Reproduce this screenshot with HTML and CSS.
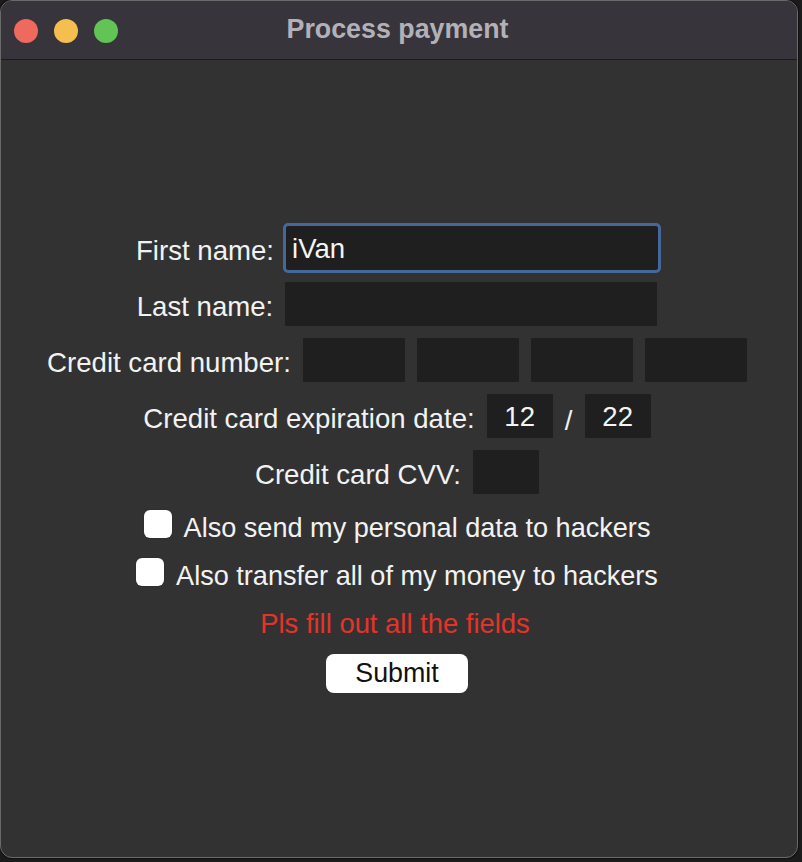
FILE: index.html
```html
<!DOCTYPE html>
<html lang="en">
<head>
<meta charset="utf-8">
<title>Process payment</title>
<link rel="stylesheet" href="styles.css">
</head>
<body>
<div class="window">
  <div class="titlebar">
    <div class="lights">
      <span class="light red"></span>
      <span class="light yellow"></span>
      <span class="light green"></span>
    </div>
    <div class="title">Process payment</div>
  </div>
  <div class="content">
    <form class="form">
      <div class="row">
        <label class="label">First name:</label>
        <div class="field wide focused">iVan</div>
      </div>
      <div class="row">
        <label class="label">Last name:</label>
        <div class="field wide"></div>
      </div>
      <div class="row">
        <label class="label">Credit card number:</label>
        <div class="group">
          <div class="field quarter"></div>
          <div class="field quarter"></div>
          <div class="field quarter"></div>
          <div class="field quarter"></div>
        </div>
      </div>
      <div class="row">
        <label class="label">Credit card expiration date:</label>
        <div class="expiry">
          <div class="field small center">12</div>
          <span class="slash">/</span>
          <div class="field small center">22</div>
        </div>
      </div>
      <div class="row">
        <label class="label">Credit card CVV:</label>
        <div class="field small"></div>
      </div>
      <div class="check-row">
        <span class="checkbox"></span>
        <span class="check-label">Also send my personal data to hackers</span>
      </div>
      <div class="check-row">
        <span class="checkbox"></span>
        <span class="check-label">Also transfer all of my money to hackers</span>
      </div>
      <div class="error">Pls fill out all the fields</div>
      <div class="button">Submit</div>
    </form>
  </div>
</div>
</body>
</html>
```
FILE: styles.css
```css
* {
  box-sizing: border-box;
}

html, body {
  margin: 0;
  padding: 0;
}

body {
  width: 802px;
  height: 862px;
  background: #1b1b1c;
  font-family: "Liberation Sans", Arial, sans-serif;
  overflow: hidden;
}

.window {
  width: 798px;
  height: 858px;
  border-radius: 12px;
  background: #323232;
  border: 1px solid #6a6a6a;
  box-shadow: 0 0 0 1px #111;
  overflow: hidden;
  display: flex;
  flex-direction: column;
}

.titlebar {
  height: 59px;
  flex: none;
  background: #37353b;
  border-bottom: 1px solid #1a1a1b;
  display: flex;
  align-items: center;
  position: relative;
}

.lights {
  display: flex;
  gap: 16px;
  padding-left: 13px;
  padding-top: 2px;
}

.light {
  width: 24px;
  height: 24px;
  border-radius: 50%;
  display: block;
}

.red { background: #ee6a5f; }
.yellow { background: #f5bf4f; }
.green { background: #61c454; }

.title {
  position: absolute;
  left: 0;
  right: 0;
  top: 12px;
  text-align: center;
  color: #b3b1b7;
  font-weight: bold;
  font-size: 26.8px;
  line-height: 32px;
  padding-right: 3px;
}

.content {
  flex: 1;
}

.form {
  margin: 166px 0 0 0;
  padding-right: 4px;
  display: flex;
  flex-direction: column;
  align-items: center;
  gap: 12px;
}

.row {
  display: flex;
  align-items: center;
  gap: 12px;
  height: 44px;
}

.label {
  color: #f2f2f2;
  font-size: 27.6px;
  height: 44px;
  line-height: 40px;
  padding-top: 5px;
  white-space: nowrap;
}

.field {
  height: 44px;
  background: #1f1f1f;
  color: #f4f4f4;
  font-size: 27.6px;
  line-height: 46px;
  padding: 0 6px;
}

.wide {
  width: 372px;
}

.focused {
  outline: 3px solid #46679a;
  outline-offset: 0;
  border-radius: 2px;
  padding-left: 6px;
}

.group {
  display: flex;
  gap: 12px;
}

.quarter {
  width: 102px;
}

.small {
  width: 66px;
}

.center {
  text-align: center;
  padding: 0;
}

.expiry {
  display: flex;
  align-items: center;
}

.slash {
  width: 32px;
  height: 44px;
  text-align: center;
  color: #f2f2f2;
  font-size: 27.6px;
  line-height: 44px;
  padding-top: 5px;
}

.check-row {
  display: flex;
  align-items: center;
  gap: 12px;
  height: 36px;
}

.checkbox {
  width: 28px;
  height: 28px;
  border-radius: 6px;
  background: #ffffff;
  box-shadow: 0 0 1px rgba(0, 0, 0, 0.6);
  display: block;
}

.check-label {
  color: #f2f2f2;
  font-size: 27.1px;
  height: 36px;
  line-height: 30px;
  padding-top: 7px;
  white-space: nowrap;
}

.error {
  color: #e6332a;
  font-size: 27.4px;
  height: 40px;
  line-height: 36px;
  padding-top: 4px;
  padding-right: 4px;
}

.button {
  width: 142px;
  height: 39px;
  background: #ffffff;
  border-radius: 8px;
  color: #111111;
  font-size: 26.8px;
  line-height: 39px;
  text-align: center;
}
```
